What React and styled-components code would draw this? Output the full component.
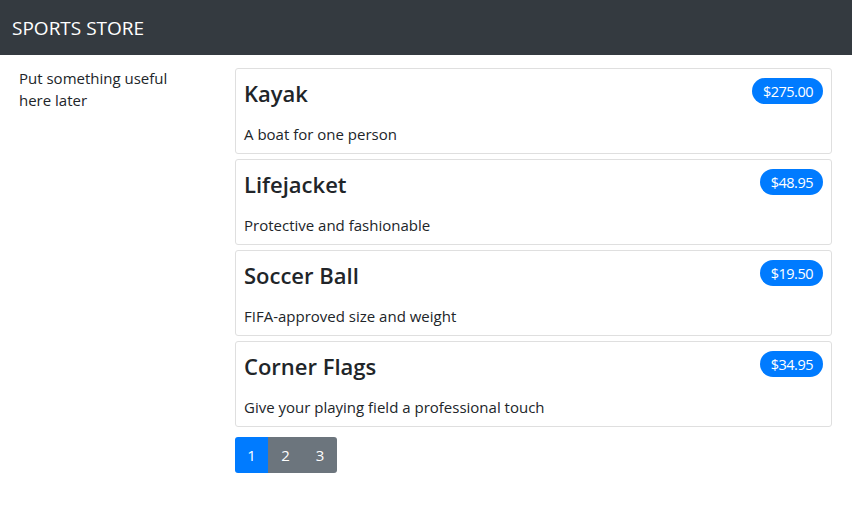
import React, { useState } from 'react';
import styled, { createGlobalStyle } from 'styled-components';

const GlobalStyle = createGlobalStyle`
    body {
        margin: 0;
        font-family: "Open Sans", "Noto Sans", sans-serif;
        font-size: 16px;
        color: #212529;
        background: #fff;
    }
    * { box-sizing: border-box; }
`

const products = [
    { name: 'Kayak', description: 'A boat for one person', price: 275 },
    { name: 'Lifejacket', description: 'Protective and fashionable', price: 48.95 },
    { name: 'Soccer Ball', description: 'FIFA-approved size and weight', price: 19.5 },
    { name: 'Corner Flags', description: 'Give your playing field a professional touch', price: 34.95 },
];

const Navbar = styled.div`
    background: #343a40;
    height: 55px;
    display: flex;
    align-items: center;
    padding: 0 12px;
    color: #fff;
    font-size: 19px;
`

const Row = styled.div`
    display: flex;
    padding-top: 13px;
`

const Sidebar = styled.div`
    width: 235px;
    padding: 0 50px 0 19px;
    font-size: 15px;
    line-height: 22px;
    margin-top: -1px;
`

const Main = styled.div`
    width: 597px;
    display: flex;
    flex-direction: column;
    gap: 5px;
`

const Card = styled.div`
    border: 1px solid #dfdfdf;
    border-radius: 3px;
    height: 86px;
    padding: 9px 8px 0 8px;
`

const CardHead = styled.div`
    display: flex;
    justify-content: space-between;
    align-items: flex-start;
    height: 30px;
`

const Title = styled.h4`
    margin: 0;
    font-size: 22px;
    font-weight: 600;
    line-height: 30px;
`

const Badge = styled.span`
    background: #007bff;
    color: #fff;
    border-radius: 13px;
    height: 26px;
    margin-top: 0;
    padding: 0 10px 0 11px;
    display: flex;
    align-items: center;
    font-size: 14.5px;
    letter-spacing: -0.5px;
`

const Desc = styled.div`
    margin-top: 15px;
    font-size: 15px;
    line-height: 22px;
`

const Pager = styled.div`
    display: flex;
    margin-top: 5px;
`

const PageButton = styled.button`
    border: none;
    height: 36px;
    width: ${p => p.$w}px;
    background: ${p => p.$active ? '#007bff' : '#6c757d'};
    color: #fff;
    font-family: inherit;
    font-size: 15px;
    padding: 0;
    &:first-child { border-radius: 3px 0 0 3px; }
    &:last-child { border-radius: 0 3px 3px 0; }
`

const App = () => {
    const [page, setPage] = useState(1);

    return (
        <>
            <GlobalStyle />
            <Navbar>SPORTS STORE</Navbar>
            <Row>
                <Sidebar>Put something useful here later</Sidebar>
                <Main>
                    {products.map(p => (
                        <Card key={p.name}>
                            <CardHead>
                                <Title>{p.name}</Title>
                                <Badge>${p.price.toFixed(2)}</Badge>
                            </CardHead>
                            <Desc>{p.description}</Desc>
                        </Card>
                    ))}
                    <Pager>
                        {[1, 2, 3].map(n => (
                            <PageButton key={n} $w={n === 1 ? 33 : n === 2 ? 35 : 34} $active={n === page} onClick={() => setPage(n)}>{n}</PageButton>
                        ))}
                    </Pager>
                </Main>
            </Row>
        </>
    )
};

export default App;
